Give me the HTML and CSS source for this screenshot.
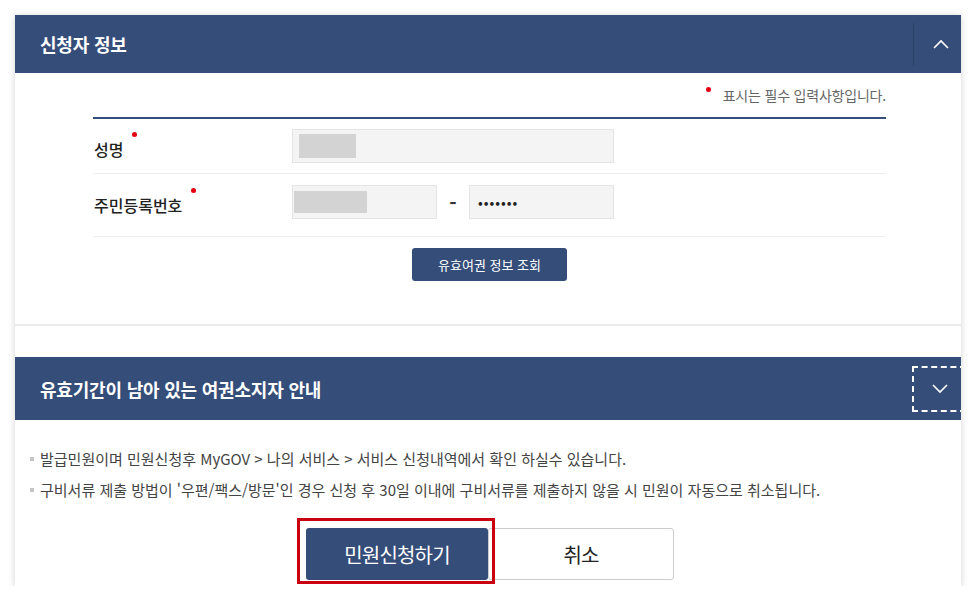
FILE: index.html
```html
<!DOCTYPE html>
<html lang="ko">
<head>
    <meta charset="UTF-8">
    <title>신청자 정보</title>
    <link rel="stylesheet" href="styles.css">
</head>
<body>
    <div class="card">
        <!-- 신청자 정보 -->
        <section class="panel panel-info">
            <div class="panel-head">
                <h2>신청자 정보</h2>
                <button class="toggle toggle-up" type="button" aria-label="접기">
                    <svg width="16" height="10" viewBox="0 0 16 10"><path d="M1 9 L8 2 L15 9" fill="none" stroke="#fff" stroke-width="1.6"/></svg>
                </button>
            </div>
            <div class="panel-body">
                <p class="req-note"><span class="req-dot"></span>표시는 필수 입력사항입니다.</p>
                <div class="form-table">
                    <div class="form-row">
                        <div class="form-label">성명<span class="req-dot"></span></div>
                        <div class="form-field">
                            <div class="input input-wide"><span class="mask mask-name"></span></div>
                        </div>
                    </div>
                    <div class="form-row form-row-last">
                        <div class="form-label">주민등록번호<span class="req-dot"></span></div>
                        <div class="form-field">
                            <div class="input input-half"><span class="mask mask-rrn"></span></div>
                            <span class="dash">-</span>
                            <div class="input input-half"><span class="pw">•••••••</span></div>
                        </div>
                    </div>
                </div>
                <div class="form-actions">
                    <button class="btn-small" type="button">유효여권 정보 조회</button>
                </div>
            </div>
        </section>

        <!-- 여권소지자 안내 -->
        <section class="panel panel-guide">
            <div class="panel-head">
                <h2>유효기간이 남아 있는 여권소지자 안내</h2>
                <button class="toggle toggle-down" type="button" aria-label="펼치기">
                    <svg width="16" height="10" viewBox="0 0 16 10"><path d="M1 1 L8 8 L15 1" fill="none" stroke="#fff" stroke-width="1.6"/></svg>
                </button>
            </div>
            <div class="panel-body guide-body">
                <ul class="guide-list">
                    <li>발급민원이며 민원신청후 MyGOV &gt; 나의 서비스 &gt; 서비스 신청내역에서 확인 하실수 있습니다.</li>
                    <li>구비서류 제출 방법이 '우편/팩스/방문'인 경우 신청 후 30일 이내에 구비서류를 제출하지 않을 시 민원이 자동으로 취소됩니다.</li>
                </ul>
                <div class="submit-row">
                    <div class="submit-wrap">
                        <button class="btn-big btn-primary" type="button">민원신청하기</button>
                        <span class="highlight"></span>
                    </div>
                    <button class="btn-big btn-cancel" type="button">취소</button>
                </div>
            </div>
        </section>
    </div>
</body>
</html>
```

FILE: styles.css
```css
/* Reset */
* {
    margin: 0;
    padding: 0;
    box-sizing: border-box;
}

body {
    font-family: "Noto Sans CJK KR", "Noto Sans", sans-serif;
    background: #ffffff;
    color: #222222;
    padding: 15px 15px 0 15px;
    width: 976px;
}

button {
    font-family: inherit;
    border: none;
    cursor: pointer;
}

/* Card */
.card {
    width: 946px;
    background: #ffffff;
    box-shadow: 0 1px 7px rgba(0, 0, 0, 0.18);
    padding-bottom: 6px;
}

/* Panel head */
.panel-head {
    background: #354d79;
    color: #ffffff;
    display: flex;
    align-items: center;
    justify-content: space-between;
    padding-left: 25px;
    overflow: hidden;
}

.panel-head h2 {
    font-size: 18px;
    font-weight: 700;
    letter-spacing: -0.2px;
}

.panel-info .panel-head {
    height: 58px;
}

.panel-guide .panel-head {
    height: 63px;
}

.toggle {
    background: transparent;
    display: flex;
    align-items: center;
    justify-content: center;
}

.toggle-up {
    width: 48px;
    height: 43px;
    padding-left: 6px;
    border-left: 1px solid #2c4168;
}

.toggle-down {
    width: 54px;
    height: 46px;
    margin-right: -5px;
    padding-left: 2px;
    border: 2px dashed #ffffff;
}

/* Panel body */
.panel-info .panel-body {
    padding: 12px 75px 43px 78px;
    border-bottom: 2px solid #ebebeb;
}

.req-note {
    text-align: right;
    font-size: 14px;
    color: #666666;
    letter-spacing: -0.2px;
    line-height: 20px;
    padding-bottom: 12px;
    border-bottom: 2px solid #354d79;
}

.req-dot {
    display: inline-block;
    width: 5px;
    height: 5px;
    border-radius: 50%;
    background: #e60012;
}

.req-note .req-dot {
    margin-right: 12px;
    vertical-align: 9px;
}

.form-row {
    display: flex;
    align-items: center;
    padding: 10px 0;
    border-bottom: 1px solid #eeeeee;
}

.form-row-last {
    padding: 11px 0 17px 0;
}

.form-label {
    width: 199px;
    font-size: 16px;
    font-weight: 500;
    letter-spacing: 0;
    line-height: 24px;
    color: #222222;
    padding-left: 1px;
}

.form-label .req-dot {
    margin-left: 9px;
    vertical-align: 19px;
}

.form-field {
    display: flex;
    align-items: center;
}

.input {
    height: 34px;
    background: #f4f4f4;
    border: 1px solid #e4e4e4;
    display: flex;
    align-items: center;
}

.input-wide {
    width: 322px;
}

.input-half {
    width: 145px;
}

.mask {
    display: block;
    background: #d3d3d3;
}

.mask-name {
    width: 57px;
    height: 24px;
    margin-left: 6px;
}

.mask-rrn {
    width: 73px;
    height: 22px;
    margin-left: 1px;
}

.dash {
    width: 32px;
    text-align: center;
    font-size: 20px;
    font-weight: 700;
    color: #333333;
}

.pw {
    font-size: 14px;
    color: #222222;
    margin-left: 8px;
    letter-spacing: 1px;
}

.form-actions {
    display: flex;
    justify-content: center;
    padding-top: 11px;
}

.btn-small {
    width: 155px;
    height: 33px;
    background: #354d79;
    color: #ffffff;
    font-size: 13px;
    border-radius: 3px;
}

/* Guide */
.panel-guide {
    margin-top: 31px;
}

.guide-body {
    padding: 23px 15px 0 0;
}

.guide-list {
    list-style: none;
}

.guide-list li {
    font-size: 15px;
    line-height: 31px;
    color: #444444;
    letter-spacing: 0;
    padding-left: 25px;
    display: flex;
    align-items: center;
}

.guide-list li::before {
    content: '';
    width: 4px;
    height: 4px;
    background: #c4c4c4;
    margin-left: -10px;
    margin-right: 6px;
}

.submit-row {
    display: flex;
    justify-content: center;
    margin-top: 23px;
    padding-left: 19px;
}

.submit-wrap {
    position: relative;
}

.btn-big {
    height: 52px;
    font-size: 20px;
    letter-spacing: -0.8px;
}

.btn-primary {
    width: 182px;
    background: #354d79;
    color: #ffffff;
    border-radius: 3px;
}

.btn-cancel {
    width: 186px;
    background: #ffffff;
    color: #222222;
    border: 1px solid #cccccc;
    border-radius: 3px;
}

/* red annotation box */
.highlight {
    position: absolute;
    top: -10px;
    left: -9px;
    right: -7px;
    bottom: -4px;
    border: 3px solid #c8000f;
    pointer-events: none;
}
```
